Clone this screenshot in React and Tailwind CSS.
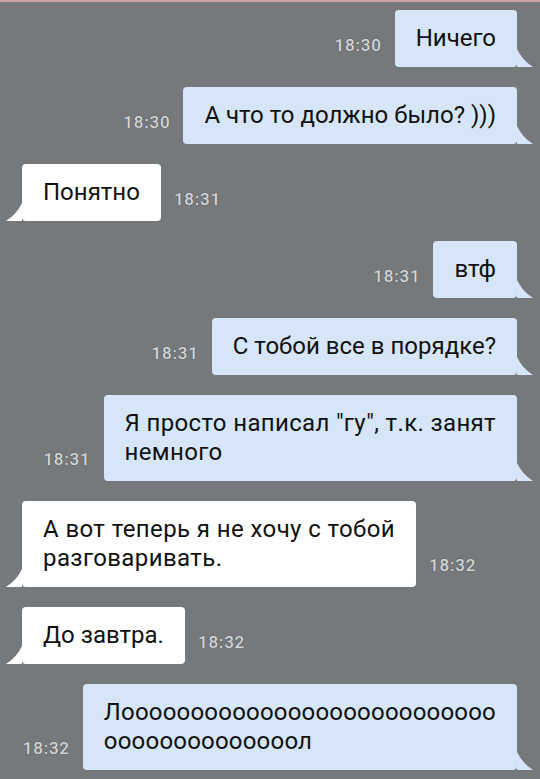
const messages = [
  { out: true, time: "18:30", lines: ["Ничего"] },
  { out: true, time: "18:30", lines: ["А что то должно было? )))"] },
  { out: false, time: "18:31", lines: ["Понятно"] },
  { out: true, time: "18:31", lines: ["втф"] },
  { out: true, time: "18:31", lines: ["С тобой все в порядке?"] },
  {
    out: true,
    time: "18:31",
    lines: ['Я просто написал "гу", т.к. занят', "немного"],
    cls: "tracking-[0.35px]",
  },
  {
    out: false,
    time: "18:32",
    lines: ["А вот теперь я не хочу с тобой", "разговаривать."],
    cls: "tracking-[0.4px]",
  },
  { out: false, time: "18:32", lines: ["До завтра."] },
  {
    out: true,
    time: "18:32",
    lines: ["Л" + "о".repeat(27), "о".repeat(14) + "л"],
    cls: "tracking-[0.2px]",
  },
];

const Tail = ({ out }) =>
  out ? (
    <svg
      className="absolute bottom-0 right-[-16px]"
      width="16"
      height="18"
      viewBox="0 0 16 18"
    >
      <path d="M0 0 Q5 11 16 18 L0 18 Z" fill="#d6e6f8" />
    </svg>
  ) : (
    <svg
      className="absolute bottom-0 left-[-16px]"
      width="16"
      height="18"
      viewBox="0 0 16 18"
    >
      <path d="M16 0 Q11 11 0 18 L16 18 Z" fill="#ffffff" />
    </svg>
  );

const Time = ({ children }) => (
  <span className="mb-[13px] text-[17px] font-medium leading-[17px] tracking-[0.8px] text-[#d3d6da] [text-shadow:0_0_1px_rgba(0,0,0,0.55)]">
    {children}
  </span>
);

const Row = ({ msg }) => {
  const bubble = (
    <div
      className={
        "relative rounded-[4px] px-[21px] py-[14px] text-[24px] leading-[29px] text-[#111] whitespace-nowrap " +
        (msg.out ? "bg-[#d6e6f8] " : "bg-white ") +
        (msg.cls || "")
      }
    >
      {msg.lines.map((l, i) => (
        <div key={i}>{l}</div>
      ))}
      <Tail out={msg.out} />
    </div>
  );

  return msg.out ? (
    <div className="flex items-end justify-end gap-[13px] pr-[23px]">
      <Time>{msg.time}</Time>
      {bubble}
    </div>
  ) : (
    <div className="flex items-end justify-start gap-[13px] pl-[22px]">
      {bubble}
      <Time>{msg.time}</Time>
    </div>
  );
};

export default function App() {
  return (
    <div className="min-h-screen w-full bg-[#76797c] border-t-2 border-[#c9a3a3] font-['Roboto','Liberation_Sans',sans-serif]">
      <div className="flex flex-col gap-[20px] pt-[8px] pb-[10px]">
        {messages.map((m, i) => (
          <Row key={i} msg={m} />
        ))}
      </div>
    </div>
  );
}
